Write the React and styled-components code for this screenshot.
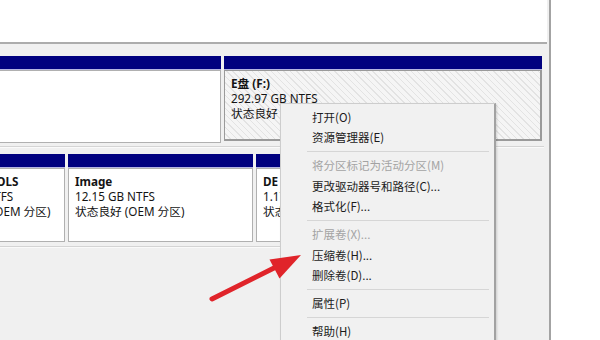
import React from "react"
import styled, { createGlobalStyle } from "styled-components"

const GlobalStyle = createGlobalStyle`
  html, body {
    margin: 0;
    padding: 0;
    background: #fff;
  }
  body {
    font-family: "Noto Sans", "Noto Sans CJK SC", sans-serif;
  }
`

const Window = styled.div`
  position: relative;
  width: 600px;
  height: 340px;
  overflow: hidden;
  display: flex;
  background: #fff;
`

const Main = styled.div`
  width: 549px;
  display: flex;
  flex-direction: column;
  background: #f0f0f0;
  border-right: 2px solid #a3a3a3;
`

const TopPane = styled.div`
  height: 42px;
  margin-right: 2px;
  background: #fff;
  border-bottom: 2px solid #acacac;
`

const DiskArea = styled.div`
  flex: 1;
  padding-right: 5px;
  overflow: hidden;
`

const DiskRow = styled.div`
  display: flex;
  gap: 3px;
  width: ${(p) => (p.$width ? `${p.$width}px` : "auto")};
  padding: ${(p) => p.$top}px 0 ${(p) => p.$bottom}px;
  border-bottom: 1px solid #d4d4d4;
  box-shadow: 0 1px 0 #fafafa;
`

const Partition = styled.div`
  flex: 0 0 ${(p) => p.$w}px;
  margin-left: ${(p) => p.$shift || 0}px;
  display: flex;
  flex-direction: column;
`

const Bar = styled.div`
  height: 13px;
  background: #00007f;
  border-bottom: 1px solid #b4b4e2;
`

const Body = styled.div`
  height: ${(p) => p.$h}px;
  box-sizing: border-box;
  padding: 5px 6px;
  border: 1px solid ${(p) => (p.$selected ? "#9a9a9a" : "#b0b0b0")};
  border-width: ${(p) => (p.$selected ? "1px 2px 2px 1px" : "1px")};
  background: ${(p) =>
    p.$selected
      ? "repeating-linear-gradient(45deg, #f5f5f5 0 3.5px, #e3e3e3 3.5px 4.5px)"
      : "#fff"};
  font-size: 11.7px;
  line-height: 15px;
  color: #141414;
  white-space: nowrap;
  overflow: hidden;
`

const Name = styled.div`
  font-weight: 700;
`

const Line = styled.div``

const Menu = styled.div`
  position: absolute;
  left: 280px;
  top: 103px;
  width: 213px;
  height: 260px;
  padding-top: 2.5px;
  background: #f1f1f1;
  border: 1px solid #cdcdcd;
  border-right: 2px solid #a2a2a2;
  box-shadow: 1px 1px 2px rgba(0, 0, 0, 0.15);
`

const MenuItem = styled.div`
  height: 20.5px;
  line-height: 20.5px;
  padding-left: 31px;
  font-family: "Noto Sans CJK SC", "Noto Sans", sans-serif;
  font-size: 11.5px;
  color: ${(p) => (p.$disabled ? "#a3a3a3" : "#1b1b1b")};
  white-space: nowrap;
`

const Separator = styled.div`
  height: 1px;
  margin: 3.25px 5px 3.25px 26px;
  background: #d6d6d6;
`

const RightPane = styled.div`
  flex: 1;
  background: #fff;
`

const ArrowLayer = styled.svg`
  position: absolute;
  left: 0;
  top: 0;
  pointer-events: none;
`

const menu = [
  { label: "打开(O)" },
  { label: "资源管理器(E)" },
  "sep",
  { label: "将分区标记为活动分区(M)", disabled: true },
  { label: "更改驱动器号和路径(C)..." },
  { label: "格式化(F)..." },
  "sep",
  { label: "扩展卷(X)...", disabled: true },
  { label: "压缩卷(H)..." },
  { label: "删除卷(D)..." },
  "sep",
  { label: "属性(P)" },
  "sep",
  { label: "帮助(H)" },
]

const PartitionBox = ({ w, shift, h, selected, lines }) => (
  <Partition $w={w} $shift={shift}>
    <Bar />
    <Body $h={h} $selected={selected}>
      {lines && (
        <>
          <Name>{lines[0]}</Name>
          <Line>{lines[1]}</Line>
          <Line>{lines[2]}</Line>
        </>
      )}
    </Body>
  </Partition>
)

export default function App() {
  return (
    <>
      <GlobalStyle />
      <Window>
        <Main>
          <TopPane />
          <DiskArea>
            <DiskRow $top={12} $bottom={3}>
              <PartitionBox w={321} shift={-100} h={73} />
              <PartitionBox
                w={318}
                h={71}
                selected
                lines={["E盘  (F:)", "292.97 GB NTFS", "状态良好 (基本数据分区)"]}
              />
            </DiskRow>
            <DiskRow $top={7} $bottom={4} $width={470}>
              <PartitionBox
                w={131}
                shift={-66}
                h={74}
                lines={["WINRETOOLS", "990 MB NTFS", "状态良好 (OEM 分区)"]}
              />
              <PartitionBox
                w={185}
                h={74}
                lines={["Image", "12.15 GB NTFS", "状态良好 (OEM 分区)"]}
              />
              <PartitionBox
                w={184}
                h={74}
                lines={["DE (D:)", "1.17 TB NTFS", "状态良好 (基本数据分区)"]}
              />
            </DiskRow>
          </DiskArea>
        </Main>
        <RightPane />

        <Menu>
          {menu.map((item, i) =>
            item === "sep" ? (
              <Separator key={i} />
            ) : (
              <MenuItem key={i} $disabled={item.disabled}>
                {item.label}
              </MenuItem>
            )
          )}
        </Menu>

        <ArrowLayer width="600" height="340" viewBox="0 0 600 340">
          <line
            x1="212"
            y1="299"
            x2="278"
            y2="266"
            stroke="#e0242a"
            strokeWidth="5"
            strokeLinecap="round"
          />
          <polygon points="301,255 269.5,259.5 279.5,278.5" fill="#e0242a" />
        </ArrowLayer>
      </Window>
    </>
  )
}
